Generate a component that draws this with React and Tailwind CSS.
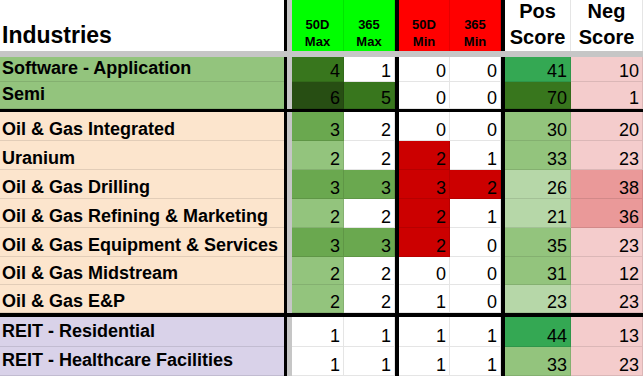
import React from "react";

const DG3 = "bg-[#274e13]";
const DG2 = "bg-[#38761d]";
const G1 = "bg-[#6aa84f]";
const G2 = "bg-[#93c47d]";
const G3 = "bg-[#b6d7a8]";
const GS = "bg-[#34a853]";
const W = "bg-white";
const R = "bg-[#cc0000]";
const P = "bg-[#f4cccc]";
const P2 = "bg-[#ea9999]";

const GL = "bg-[#93c47d] items-center pb-[2px]";
const OR = "bg-[#fce5cd] items-end pb-[1px]";
const PU = "bg-[#d9d2e9] items-center pb-[2px]";

const WIDTHS = ["w-[52px]", "w-[51px]", "w-[51px]", "w-[51px]", "w-[66px]", "w-[72px]"];

const groups = [
  [
    { name: "Software - Application", bg: GL, h: "h-[25px]", v: [[4, DG2], [1, W], [0, W], [0, W], [41, GS], [10, P]] },
    { name: "Semi", bg: GL, h: "h-[27px]", v: [[6, DG3], [5, DG2], [0, W], [0, W], [70, DG2], [1, P]] },
  ],
  [
    { name: "Oil & Gas Integrated", bg: OR, h: "h-[29px]", v: [[3, G1], [2, W], [0, W], [0, W], [30, G2], [20, P]] },
    { name: "Uranium", bg: OR, h: "h-[29px]", v: [[2, G2], [2, W], [2, R], [1, W], [33, G2], [23, P]] },
    { name: "Oil & Gas Drilling", bg: OR, h: "h-[29px]", v: [[3, G1], [3, G1], [3, R], [2, R], [26, G3], [38, P2]] },
    { name: "Oil & Gas Refining & Marketing", bg: OR, h: "h-[29px]", v: [[2, G2], [2, W], [2, R], [1, W], [21, G3], [36, P2]] },
    { name: "Oil & Gas Equipment & Services", bg: OR, h: "h-[29px]", v: [[3, G1], [3, G1], [2, R], [0, W], [35, G2], [23, P]] },
    { name: "Oil & Gas Midstream", bg: OR, h: "h-[28px]", v: [[2, G2], [2, W], [0, W], [0, W], [31, G2], [12, P]] },
    { name: "Oil & Gas E&P", bg: OR, h: "h-[28px]", v: [[2, G2], [2, W], [1, W], [0, W], [23, G3], [23, P]] },
  ],
  [
    { name: "REIT - Residential", bg: PU, h: "h-[30px]", v: [[1, W], [1, W], [1, W], [1, W], [44, GS], [13, P]] },
    { name: "REIT - Healthcare Facilities", bg: PU, h: "h-[29px]", v: [[1, W], [1, W], [1, W], [1, W], [33, G2], [23, P]] },
  ],
];

function Num({ w, value, bg }) {
  return (
    <div
      className={`${w} ${bg} flex items-end justify-end pr-[3px] text-[18px] leading-[20px] text-black border-r border-b border-black/10`}
    >
      {value}
    </div>
  );
}

function Row({ row }) {
  const cells = row.v.map(([value, bg], i) => (
    <Num key={i} w={WIDTHS[i]} value={value} bg={bg} />
  ));
  return (
    <div className={`flex ${row.h}`}>
      <div
        className={`w-[284px] ${row.bg} flex pl-[2px] text-[18px] font-bold leading-[20px] text-black border-b border-black/10 whitespace-nowrap`}
      >
        {row.name}
      </div>
      <div className="w-[3px] bg-black" />
      <div className="w-[5px] bg-[#c6c6c6]" />
      {cells[0]}
      {cells[1]}
      <div className="w-[4px] bg-black" />
      {cells[2]}
      {cells[3]}
      <div className="w-[4px] bg-black" />
      {cells[4]}
      {cells[5]}
    </div>
  );
}

function SmallHead({ w, bg, top, bottom }) {
  return (
    <div
      className={`${w} ${bg} flex flex-col items-center justify-end pb-[1px] text-[13px] font-bold leading-[17px] text-black border-r border-black/10`}
    >
      <span>{top}</span>
      <span>{bottom}</span>
    </div>
  );
}

function BigHead({ w, top, bottom }) {
  return (
    <div
      className={`${w} bg-white flex flex-col items-center justify-end pb-[1px] text-[20px] font-bold leading-[26px] text-black border-r border-black/10`}
    >
      <span>{top}</span>
      <span>{bottom}</span>
    </div>
  );
}

export default function App() {
  return (
    <div
      className="w-[643px] h-[376px] overflow-hidden bg-white flex flex-col"
      style={{ fontFamily: '"Liberation Sans", Arial, sans-serif' }}
    >
      <div className="flex h-[51px] shrink-0">
        <div className="w-[284px] bg-white flex items-end pl-[2px] pb-[3px] text-[23px] font-bold leading-[26px] text-black">
          Industries
        </div>
        <div className="w-[3px] bg-black" />
        <div className="w-[5px] bg-[#c6c6c6]" />
        <SmallHead w="w-[52px]" bg="bg-[#00ff00]" top="50D" bottom="Max" />
        <SmallHead w="w-[51px]" bg="bg-[#00ff00]" top="365" bottom="Max" />
        <div className="w-[4px] bg-black" />
        <SmallHead w="w-[51px]" bg="bg-[#ff0000]" top="50D" bottom="Min" />
        <SmallHead w="w-[51px]" bg="bg-[#ff0000]" top="365" bottom="Min" />
        <div className="w-[4px] bg-black" />
        <BigHead w="w-[66px]" top="Pos" bottom="Score" />
        <BigHead w="w-[72px]" top="Neg" bottom="Score" />
      </div>
      <div className="h-[6px] shrink-0 bg-[#c6c6c6]" />
      {groups.map((g, gi) => (
        <React.Fragment key={gi}>
          {gi === 1 && <div className="h-[3px] shrink-0 bg-black" />}
          {gi === 2 && <div className="h-[4px] shrink-0 bg-black" />}
          {g.map((row) => (
            <Row key={row.name} row={row} />
          ))}
        </React.Fragment>
      ))}
    </div>
  );
}
